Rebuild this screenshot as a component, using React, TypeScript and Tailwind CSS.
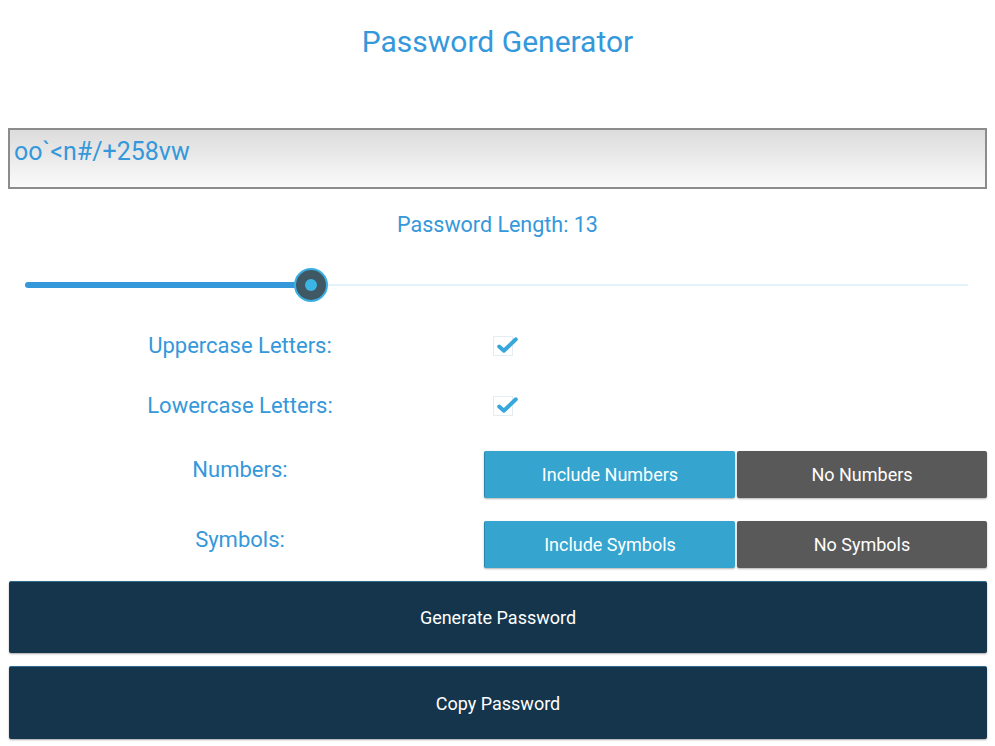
import React, { useState } from "react";

const font = { fontFamily: "Roboto, 'Liberation Sans', sans-serif" };

function Check({ checked, onChange }: { checked: boolean; onChange: () => void }) {
  return (
    <button
      onClick={onChange}
      className="relative mt-[10px] ml-[9px] h-[20px] w-[20px] border border-[#e4edf2] bg-white"
      aria-label="toggle"
    >
      {checked && (
        <svg
          viewBox="0 0 24 24"
          className="absolute -top-[5px] left-[1px] h-[25px] w-[25px] blur-[0.4px]"
          fill="none"
          stroke="#38a8dc"
          strokeWidth="3.8"
          strokeLinecap="round"
          strokeLinejoin="round"
        >
          <path d="M4 14l4.5 4L20 7" />
        </svg>
      )}
    </button>
  );
}

export default function App() {
  const [length] = useState(13);
  const [upper, setUpper] = useState(true);
  const [lower, setLower] = useState(true);
  const [numbers, setNumbers] = useState(true);
  const [symbols, setSymbols] = useState(true);
  const pct = ((310 - 25) / (968 - 25)) * 100;

  return (
    <div style={font} className="min-h-[746px] w-full bg-white px-2 text-[#3498db]">
      <h1 className="pt-[22px] text-center text-[30px] leading-[40px]">Password Generator</h1>

      <div className="mt-[66px] h-[61px] border-2 border-[#8c8c8c] bg-gradient-to-b from-[#dcdcdc] to-[#fafafa] px-[4px] pt-[6px] text-[25px] leading-[32px]">
        oo`&lt;n#/+258vw
      </div>

      <p className="mt-[22px] text-center text-[21.5px] leading-[28px]">Password Length: {length}</p>

      <div className="relative mx-[17px] mt-[29px] h-[34px]">
        <div className="absolute left-0 right-[2px] top-[16px] h-[2px] bg-[#e3f2fb]" />
        <div
          className="absolute left-0 top-[14px] h-[6px] rounded-full bg-[#3498db]"
          style={{ width: `${pct}%` }}
        />
        <div
          className="absolute top-0 flex h-[34px] w-[34px] -translate-x-1/2 items-center justify-center rounded-full border-2 border-[#3ab0e2] bg-[#3f5863]"
          style={{ left: `${pct}%` }}
        >
          <div className="h-[12px] w-[12px] rounded-full bg-[#3bb5e4]" />
        </div>
      </div>

      <div className="mt-[24px] flex h-[40px] items-start">
        <div className="w-[464px] text-center text-[22px] leading-[40px]">Uppercase Letters:</div>
        <div className="ml-[12px]">
          <Check checked={upper} onChange={() => setUpper(!upper)} />
        </div>
      </div>

      <div className="mt-[20px] flex h-[40px] items-start">
        <div className="w-[464px] text-center text-[22px] leading-[40px]">Lowercase Letters:</div>
        <div className="ml-[12px]">
          <Check checked={lower} onChange={() => setLower(!lower)} />
        </div>
      </div>

      <div className="mt-[25px] flex items-start">
        <div className="w-[464px] text-center text-[22px] leading-[38px]">Numbers:</div>
        <div className="ml-[12px] flex flex-1 gap-[2px] text-[18px] text-white">
          <button
            onClick={() => setNumbers(true)}
            className="h-[47px] flex-1 rounded-[2px] border-l border-[#2a86aa] bg-[#35a5d0] shadow-[0_1px_2px_rgba(0,0,0,0.3)]"
          >
            Include Numbers
          </button>
          <button
            onClick={() => setNumbers(false)}
            className="h-[47px] flex-1 rounded-[2px] bg-[#595959] shadow-[0_1px_2px_rgba(0,0,0,0.3)]"
          >
            No Numbers
          </button>
        </div>
      </div>

      <div className="mt-[23px] flex items-start">
        <div className="w-[464px] text-center text-[22px] leading-[38px]">Symbols:</div>
        <div className="ml-[12px] flex flex-1 gap-[2px] text-[18px] text-white">
          <button
            onClick={() => setSymbols(true)}
            className="h-[47px] flex-1 rounded-[2px] border-l border-[#2a86aa] bg-[#35a5d0] shadow-[0_1px_2px_rgba(0,0,0,0.3)]"
          >
            Include Symbols
          </button>
          <button
            onClick={() => setSymbols(false)}
            className="h-[47px] flex-1 rounded-[2px] bg-[#595959] shadow-[0_1px_2px_rgba(0,0,0,0.3)]"
          >
            No Symbols
          </button>
        </div>
      </div>

      <button className="mt-[13px] ml-[1px] block h-[72px] w-[978px] rounded-[2px] border-t border-[#2f6a8f] bg-[#15354d] text-[18px] text-white shadow-[0_1px_2px_rgba(0,0,0,0.35)]">
        Generate Password
      </button>
      <button className="mt-[13px] ml-[1px] block h-[73px] w-[978px] rounded-[2px] border-t border-[#2f6a8f] bg-[#15354d] text-[18px] text-white shadow-[0_1px_2px_rgba(0,0,0,0.35)]">
        Copy Password
      </button>
    </div>
  );
}
